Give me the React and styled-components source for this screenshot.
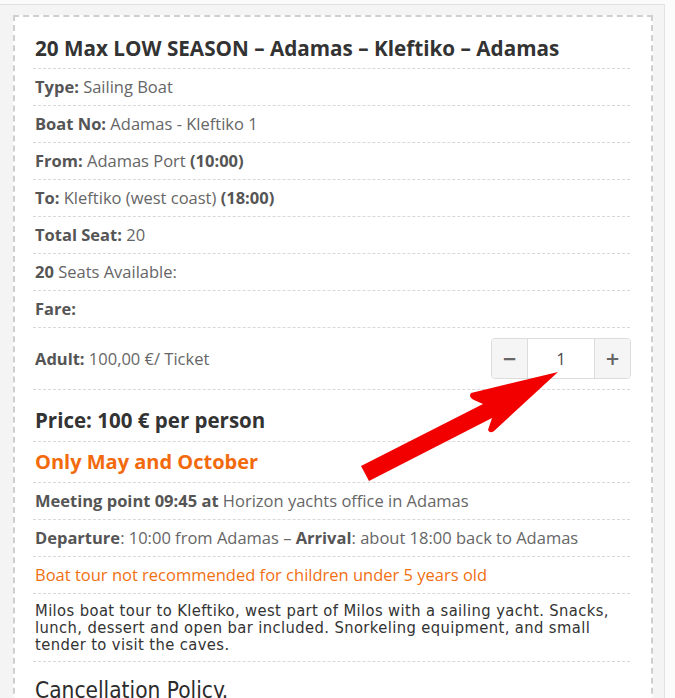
import React from "react";
import styled, { createGlobalStyle } from "styled-components";

const GlobalStyle = createGlobalStyle`
  body {
    margin: 0;
    background: #fbfbfb;
    font-family: "Open Sans", "Noto Sans", sans-serif;
  }
`;

const Page = styled.div`
  position: relative;
  height: 698px;
  overflow: hidden;
  padding-top: 4px;
  box-sizing: border-box;
`;

const Panel = styled.div`
  box-sizing: border-box;
  width: 665px;
  height: 100%;
  padding: 10px 11px 0 13px;
  background: #f4f4f4;
  border-top: 1px solid #e2e2e2;
  border-right: 1px solid #e2e2e2;
`;

const Card = styled.div`
  background: #fff;
  border: 2px dashed #cfcfcf;
  padding: 18px 21px 40px 18px;
`;

const Title = styled.h2`
  margin: 0;
  padding: 0 0 7px 2px;
  font-size: 20.7px;
  line-height: 26px;
  font-weight: 700;
  color: #333;
  border-bottom: 1px dashed #d8d8d8;
`;

const Row = styled.div`
  display: flex;
  align-items: center;
  justify-content: space-between;
  padding: ${({ $pad }) => $pad || "8px 0 8px 2px"};
  font-size: 16.5px;
  line-height: 20px;
  color: ${({ $orange }) => ($orange ? "#f07012" : "#666")};
  border-bottom: 1px dashed #d8d8d8;
`;

const Label = styled.b`
  font-weight: 700;
  color: #555;
`;

const Heading = styled.h3`
  margin: 0;
  padding: ${({ $pad }) => $pad || "8px 0 8px 2px"};
  font-size: ${({ $size }) => $size || "20px"};
  line-height: 24px;
  font-weight: 700;
  color: ${({ $orange }) => ($orange ? "#f26a0c" : "#333")};
  border-bottom: 1px dashed #d8d8d8;
`;

const Description = styled.p`
  margin: 0;
  padding: 8px 0 8px 2px;
  font-family: "DejaVu Sans Condensed", "DejaVu Sans", sans-serif;
  font-stretch: condensed;
  font-size: 16.4px;
  letter-spacing: 0.4px;
  line-height: 17px;
  color: #333;
  border-bottom: 1px dashed #d8d8d8;
`;

const SubTitle = styled.h3`
  margin: 0;
  padding: 16px 0 0 2px;
  font-family: "DejaVu Sans Condensed", "DejaVu Sans", sans-serif;
  font-stretch: condensed;
  font-size: 22.5px;
  line-height: 24px;
  font-weight: 400;
  color: #2b2b2b;
`;

const Stepper = styled.div`
  display: flex;
  height: 41px;
  margin-right: -1px;
  border: 1px solid #dcdcdc;
  border-radius: 4px;
  overflow: hidden;
  box-sizing: border-box;
`;

const StepButton = styled.button`
  width: 35px;
  border: none;
  background: #f5f5f5;
  color: #666;
  font-family: "DejaVu Sans", sans-serif;
  font-size: 18px;
  font-weight: 700;
  padding: 0;
  cursor: pointer;
`;

const Qty = styled.input`
  width: 66px;
  border: none;
  border-left: 1px solid #dcdcdc;
  border-right: 1px solid #dcdcdc;
  text-align: center;
  font-family: "Open Sans", sans-serif;
  font-size: 16px;
  color: #444;
  outline: none;
  padding: 0;
`;

const Arrow = styled.svg`
  position: absolute;
  left: 0;
  top: 0;
  pointer-events: none;
`;

export default function App() {
  return (
    <>
      <GlobalStyle />
      <Page>
        <Panel>
          <Card>
            <Title>20 Max LOW SEASON – Adamas – Kleftiko – Adamas</Title>
            <Row>
              <span><Label>Type:</Label> Sailing Boat</span>
            </Row>
            <Row>
              <span><Label>Boat No:</Label> Adamas - Kleftiko 1</span>
            </Row>
            <Row>
              <span><Label>From:</Label> Adamas Port <Label>(10:00)</Label></span>
            </Row>
            <Row>
              <span><Label>To:</Label> Kleftiko (west coast) <Label>(18:00)</Label></span>
            </Row>
            <Row>
              <span><Label>Total Seat:</Label> 20</span>
            </Row>
            <Row>
              <span><Label>20</Label> Seats Available:</span>
            </Row>
            <Row>
              <span><Label>Fare:</Label></span>
            </Row>
            <Row $pad="10px 0 10px 2px">
              <span><Label>Adult:</Label> 100,00 €/ Ticket</span>
              <Stepper>
                <StepButton>−</StepButton>
                <Qty defaultValue="1" />
                <StepButton>+</StepButton>
              </Stepper>
            </Row>
            <Heading $pad="18px 0 9px 2px" $size="20.5px">Price: 100 € per person</Heading>
            <Heading $orange>Only May and October</Heading>
            <Row>
              <span><Label>Meeting point 09:45 at</Label> Horizon yachts office in Adamas</span>
            </Row>
            <Row>
              <span>
                <Label>Departure</Label>: 10:00 from Adamas – <Label>Arrival</Label>: about 18:00 back to Adamas
              </span>
            </Row>
            <Row $orange>
              <span>Boat tour not recommended for children under 5 years old</span>
            </Row>
            <Description>
              Milos boat tour to Kleftiko, west part of Milos with a sailing yacht. Snacks, lunch, dessert and open bar included. Snorkeling equipment, and small tender to visit the caves.
            </Description>
            <SubTitle>Cancellation Policy.</SubTitle>
          </Card>
        </Panel>
        <Arrow width="675" height="698" viewBox="0 0 675 698">
          <path
            d="M558 372 L471 393 Q468 397 474 400 L483 404 L361 466 L369 481 L492 418 L488 430 Q490 434 494 431 Z"
            fill="#f20000"
          />
        </Arrow>
      </Page>
    </>
  );
}
